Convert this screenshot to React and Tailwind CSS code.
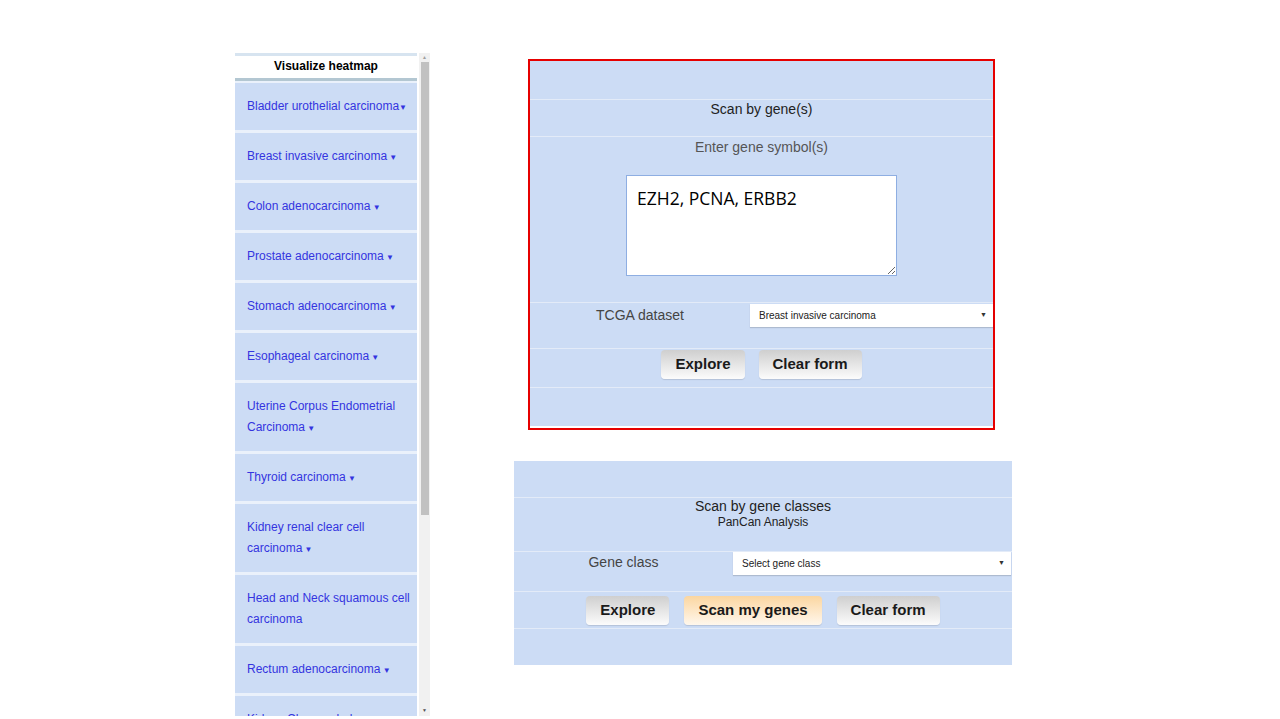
import React from 'react';

const cancers = [
    { name: 'Bladder urothelial carcinoma', arrow: true, tight: true },
    { name: 'Breast invasive carcinoma', arrow: true },
    { name: 'Colon adenocarcinoma', arrow: true },
    { name: 'Prostate adenocarcinoma', arrow: true },
    { name: 'Stomach adenocarcinoma', arrow: true },
    { name: 'Esophageal carcinoma', arrow: true },
    { name: 'Uterine Corpus Endometrial Carcinoma', arrow: true },
    { name: 'Thyroid carcinoma', arrow: true },
    { name: 'Kidney renal clear cell carcinoma', arrow: true },
    { name: 'Head and Neck squamous cell carcinoma', arrow: false },
    { name: 'Rectum adenocarcinoma', arrow: true },
    { name: 'Kidney Chromophobe', arrow: true },
];

const Button = ({ children, orange }) => (
    <button
        className={`h-[29px] px-[14px] rounded-[4px] text-[15px] font-bold text-[#1a1a1a] shadow-[0_1px_1px_rgba(0,0,0,0.12)] bg-linear-to-b ${orange ? 'from-[#fbd6a0] to-[#fff7ec]' : 'from-[#cfcfcf] to-[#fcfcfc]'}`}
    >
        {children}
    </button>
);

const FakeSelect = ({ label, width }) => (
    <div className={`${width} h-[23px] bg-white flex items-center justify-between pl-[9px] pr-[6px] text-[10px] text-[#222] shadow-[0_1px_1px_rgba(0,0,0,0.15)]`}>
        <span>{label}</span>
        <span className="text-[7px] text-[#333]">▼</span>
    </div>
);

const Sidebar = () => (
    <div className="flex h-[663px] w-[195px] shrink-0">
        <div className="w-[182px] overflow-hidden bg-[#eaf1fb]">
            <div className="border-t-[3px] border-[#d7e4f0] bg-white h-[28px] border-b-[3px] border-b-[#b3c7d2] text-center text-[12px] font-bold text-black leading-[21px]">
                Visualize heatmap
            </div>
            <div className="h-[2px]" />
            {cancers.map((c) => (
                <div key={c.name} className="bg-[#ccdcf5] mb-[3px] pl-3 pr-[2px] py-[13px] text-[12px] leading-[21px] text-[#3434e0]">
                    {c.name}
                    {c.arrow && (
                        <span className="text-[8px] leading-none">{c.tight ? '' : ' '}▼</span>
                    )}
                </div>
            ))}
        </div>
        <div className="w-[2px]" />
        <div className="w-[11px] bg-[#f1f1f1] flex flex-col items-center">
            <div className="h-[9px] text-[5px] leading-[9px] text-[#a0a0a0]">▲</div>
            <div className="w-[8px] h-[453px] bg-[#c1c1c1]" />
            <div className="flex-1" />
            <div className="h-[11px] text-[5px] leading-[11px] text-[#505050]">▼</div>
        </div>
    </div>
);

export default function App() {
    return (
        <div className="min-h-screen bg-white flex items-start pl-[235px] pt-[53px] font-['Liberation_Sans',Arial,sans-serif]">
            <Sidebar />

            <div className="ml-[84px] mt-[6px] flex flex-col">
                {/* scan by gene(s) */}
                <div className="ml-[14px] w-[467px] h-[371px] border-2 border-[#e60000] bg-[#ccdcf5] flex flex-col">
                    <div className="h-[38px]" />
                    <div className="h-[37px] border-t border-[#e3ebf8] text-center text-[14px] leading-[18px] text-[#222]">
                        Scan by gene(s)
                    </div>
                    <div className="h-[166px] border-t border-[#e3ebf8] pt-[1px] flex flex-col items-center">
                        <div className="text-[14px] leading-[18px] text-[#555]">Enter gene symbol(s)</div>
                        <textarea
                            readOnly
                            defaultValue="EZH2, PCNA, ERBB2"
                            className="mt-[19px] w-[271px] h-[101px] bg-white border border-[#8eaee2] px-[10px] pt-[9px] text-[17.5px] text-black font-['Open_Sans',sans-serif] outline-none"
                        />
                    </div>
                    <div className="h-[46px] border-t border-[#e3ebf8] pt-[1px] flex items-start">
                        <div className="w-[220px] pt-[2px] text-center text-[14px] leading-[18px] text-[#444]">TCGA dataset</div>
                        <FakeSelect label="Breast invasive carcinoma" width="w-[243px]" />
                    </div>
                    <div className="h-[39px] border-t border-[#e3ebf8] pt-[1px] flex justify-center gap-[14px]">
                        <Button>Explore</Button>
                        <Button>Clear form</Button>
                    </div>
                    <div className="flex-1 border-t border-[#e3ebf8]" />
                    <div className="h-[2px] bg-white" />
                </div>

                {/* scan by gene classes */}
                <div className="mt-[31px] w-[498px] h-[204px] bg-[#ccdcf5] flex flex-col">
                    <div className="h-[36px]" />
                    <div className="h-[54px] border-t border-[#e3ebf8] text-center text-[#222]">
                        <div className="text-[14px] leading-[17px]">Scan by gene classes</div>
                        <div className="text-[12px] leading-[15px]">PanCan Analysis</div>
                    </div>
                    <div className="h-[40px] border-t border-[#e3ebf8] flex items-start">
                        <div className="w-[219px] pt-[1px] text-center text-[14px] leading-[18px] text-[#444]">Gene class</div>
                        <FakeSelect label="Select gene class" width="w-[278px]" />
                    </div>
                    <div className="h-[37px] border-t border-[#e3ebf8] pt-[4px] flex justify-center gap-[15px]">
                        <Button>Explore</Button>
                        <Button orange>Scan my genes</Button>
                        <Button>Clear form</Button>
                    </div>
                    <div className="flex-1 border-t border-[#e3ebf8]" />
                </div>
            </div>
        </div>
    );
}
